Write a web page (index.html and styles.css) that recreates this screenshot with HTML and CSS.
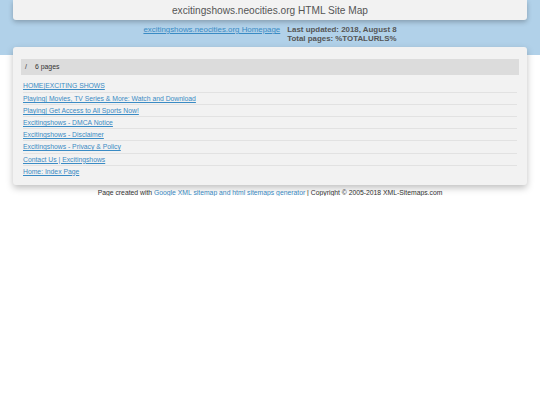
FILE: index.html
```html
<!DOCTYPE html>
<html>
<head>
<meta charset="utf-8">
<link rel="stylesheet" href="styles.css">
</head>
<body>
<div class="top">
  <div class="head">excitingshows.neocities.org HTML Site Map</div>
  <div class="info">
    <a href="#" class="home">excitingshows.neocities.org Homepage</a>
    <div class="meta">Last updated: 2018, August 8<br>Total pages: %TOTALURLS%</div>
  </div>
</div>
<div class="box">
  <div class="bar"><span class="slash">/</span><span>6 pages</span></div>
  <ul class="list">
    <li><a href="#">HOME|EXCITING SHOWS</a></li>
    <li><a href="#">Playing| Movies, TV Series &amp; More: Watch and Download</a></li>
    <li><a href="#">Playing| Get Access to All Sports Now!</a></li>
    <li><a href="#">Excitingshows - DMCA Notice</a></li>
    <li><a href="#">Excitingshows - Disclaimer</a></li>
    <li><a href="#">Excitingshows - Privacy &amp; Policy</a></li>
    <li><a href="#">Contact Us | Excitingshows</a></li>
    <li><a href="#">Home: Index Page</a></li>
  </ul>
</div>
<div class="foot">Page created with <a href="#">Google XML sitemap and html sitemaps generator</a> | Copyright © 2005-2018 XML-Sitemaps.com</div>
</body>
</html>
```
FILE: styles.css
```css
html, body { margin: 0; padding: 0; }
body {
  font-family: "Liberation Sans", Arial, sans-serif;
  background: #fff;
  color: #333;
}
.top {
  background: #b1d1e9;
  height: 55px;
  padding: 0 13px;
}
.head {
  background: #f2f2f2;
  height: 20px;
  line-height: 22px;
  text-align: center;
  font-size: 10.15px;
  color: #555;
  border-radius: 0 0 3px 3px;
  box-shadow: 0 2px 5px rgba(0,0,0,0.25);
}
.info {
  display: flex;
  justify-content: center;
  gap: 7px;
  margin-top: 5px;
  font-size: 7.9px;
  line-height: 9px;
}
.info a { color: #3a8bc4; }
.meta { font-weight: bold; color: #555; }
.box {
  position: relative;
  margin: -8px 13px 0;
  background: #f2f2f2;
  border-radius: 3px;
  box-shadow: 0 3px 7px rgba(0,0,0,0.25);
  padding: 12px 8px 8px;
}
.bar {
  background: #dcdcdc;
  height: 16px;
  line-height: 16px;
  font-size: 6.9px;
  color: #333;
  padding-left: 4px;
  display: flex;
  gap: 8px;
  margin-bottom: 5px;
}
.list {
  list-style: none;
  margin: 0;
  padding: 0 2px;
}
.list li {
  height: 12.1px;
  line-height: 12px;
  font-size: 6.8px;
  border-top: 1px solid #e2e2e2;
  box-sizing: border-box;
}
.list li:first-child { border-top: none; }
.list a { color: #3a8bc4; }
.foot {
  text-align: center;
  font-size: 6.8px;
  margin-top: 4px;
  color: #333;
}
.foot a { color: #3a8bc4; }
```
